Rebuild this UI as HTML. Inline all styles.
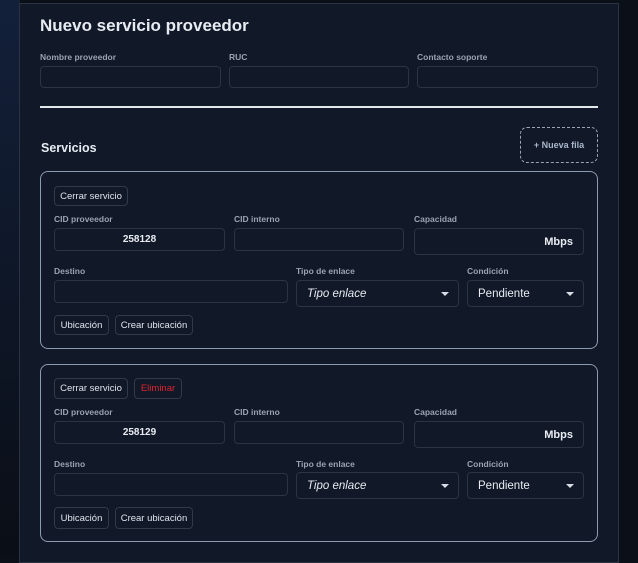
<!DOCTYPE html>
<html><head><meta charset="utf-8"><style>
*{box-sizing:border-box;margin:0;padding:0}
body{width:638px;height:556px;overflow:hidden;background:#0b0f18;font-family:"Liberation Sans",sans-serif;position:relative}
.bgl{position:absolute;left:0;top:0;width:20px;height:556px;background:linear-gradient(#13203a,#0a0e16)}
.panel{position:absolute;left:19px;top:3px;width:600px;height:560px;background:#111827;border:1px solid #2a3342}
.a{position:absolute}
.t{left:40px;top:16px;font-size:17px;font-weight:bold;color:#e8ecf2}
.lb{font-size:8.5px;font-weight:bold;color:#9aa3b2}
.in{border:1px solid #2b3444;border-radius:4px;background:#111827}
.btn{border:1px solid #2f3a4b;border-radius:4px;font-size:9.5px;color:#dfe5ee;display:flex;align-items:center;justify-content:center}
.card{position:absolute;left:40px;width:558px;height:178px;border:1px solid #8d9bb0;border-radius:8px}
.v{font-size:10px;font-weight:bold;color:#e8ecf2;display:flex;align-items:center}
.sel{font-size:11.5px;color:#e8ecf2;display:flex;align-items:center;padding-left:10px}
.car{position:absolute;right:9px;top:11px;width:0;height:0;border-left:4px solid transparent;border-right:4px solid transparent;border-top:4px solid #d8dde5}
</style></head><body>
<div class="bgl"></div>
<div class="panel"></div>
<div class="a t">Nuevo servicio proveedor</div>
<div class="a lb" style="left:40px;top:52px">Nombre proveedor</div>
<div class="a lb" style="left:229px;top:52px">RUC</div>
<div class="a lb" style="left:417px;top:52px">Contacto soporte</div>
<div class="a in" style="left:40px;top:66px;width:181px;height:22px"></div>
<div class="a in" style="left:229px;top:66px;width:180px;height:22px"></div>
<div class="a in" style="left:417px;top:66px;width:181px;height:22px"></div>
<div class="a" style="left:40px;top:106px;width:558px;height:2px;background:#e4e7ec"></div>
<div class="a" style="left:41px;top:141px;font-size:12.5px;font-weight:bold;color:#e8ecf2">Servicios</div>
<div class="a" style="left:520px;top:127px;width:78px;height:36px;border:1px dashed #9aa6b8;border-radius:7px;font-size:9px;font-weight:bold;color:#a9b7cc;display:flex;align-items:center;justify-content:center">+ Nueva fila</div>

<div class="card" style="top:171px"></div>
<div class="a btn" style="left:54px;top:186px;width:74px;height:20px">Cerrar servicio</div>
<div class="a lb" style="left:54px;top:214px">CID proveedor</div>
<div class="a lb" style="left:234px;top:214px">CID interno</div>
<div class="a lb" style="left:414px;top:214px">Capacidad</div>
<div class="a in v" style="left:54px;top:228px;width:171px;height:23px;justify-content:center">258128</div>
<div class="a in" style="left:234px;top:228px;width:170px;height:23px"></div>
<div class="a in v" style="left:414px;top:228px;width:170px;height:27px;justify-content:flex-end;padding-right:10px;font-size:11px">Mbps</div>
<div class="a lb" style="left:54px;top:266px">Destino</div>
<div class="a lb" style="left:296px;top:266px">Tipo de enlace</div>
<div class="a lb" style="left:467px;top:266px">Condición</div>
<div class="a in" style="left:54px;top:280px;width:234px;height:23px"></div>
<div class="a in sel" style="left:296px;top:280px;width:163px;height:27px;font-style:italic">Tipo enlace<span class="car"></span></div>
<div class="a in sel" style="left:467px;top:280px;width:117px;height:27px">Pendiente<span class="car"></span></div>
<div class="a btn" style="left:54px;top:315px;width:55px;height:20px">Ubicación</div>
<div class="a btn" style="left:115px;top:315px;width:78px;height:20px">Crear ubicación</div>

<div class="card" style="top:364px"></div>
<div class="a btn" style="left:54px;top:378px;width:74px;height:21px">Cerrar servicio</div>
<div class="a btn" style="left:134px;top:378px;width:48px;height:21px;color:#e0242f">Eliminar</div>
<div class="a lb" style="left:54px;top:407px">CID proveedor</div>
<div class="a lb" style="left:234px;top:407px">CID interno</div>
<div class="a lb" style="left:414px;top:407px">Capacidad</div>
<div class="a in v" style="left:54px;top:421px;width:171px;height:23px;justify-content:center">258129</div>
<div class="a in" style="left:234px;top:421px;width:170px;height:23px"></div>
<div class="a in v" style="left:414px;top:421px;width:170px;height:27px;justify-content:flex-end;padding-right:10px;font-size:11px">Mbps</div>
<div class="a lb" style="left:54px;top:459px">Destino</div>
<div class="a lb" style="left:296px;top:459px">Tipo de enlace</div>
<div class="a lb" style="left:467px;top:459px">Condición</div>
<div class="a in" style="left:54px;top:473px;width:234px;height:23px"></div>
<div class="a in sel" style="left:296px;top:472px;width:163px;height:27px;font-style:italic">Tipo enlace<span class="car"></span></div>
<div class="a in sel" style="left:467px;top:472px;width:117px;height:27px">Pendiente<span class="car"></span></div>
<div class="a btn" style="left:54px;top:507px;width:55px;height:22px">Ubicación</div>
<div class="a btn" style="left:115px;top:507px;width:78px;height:22px">Crear ubicación</div>
</body></html>
